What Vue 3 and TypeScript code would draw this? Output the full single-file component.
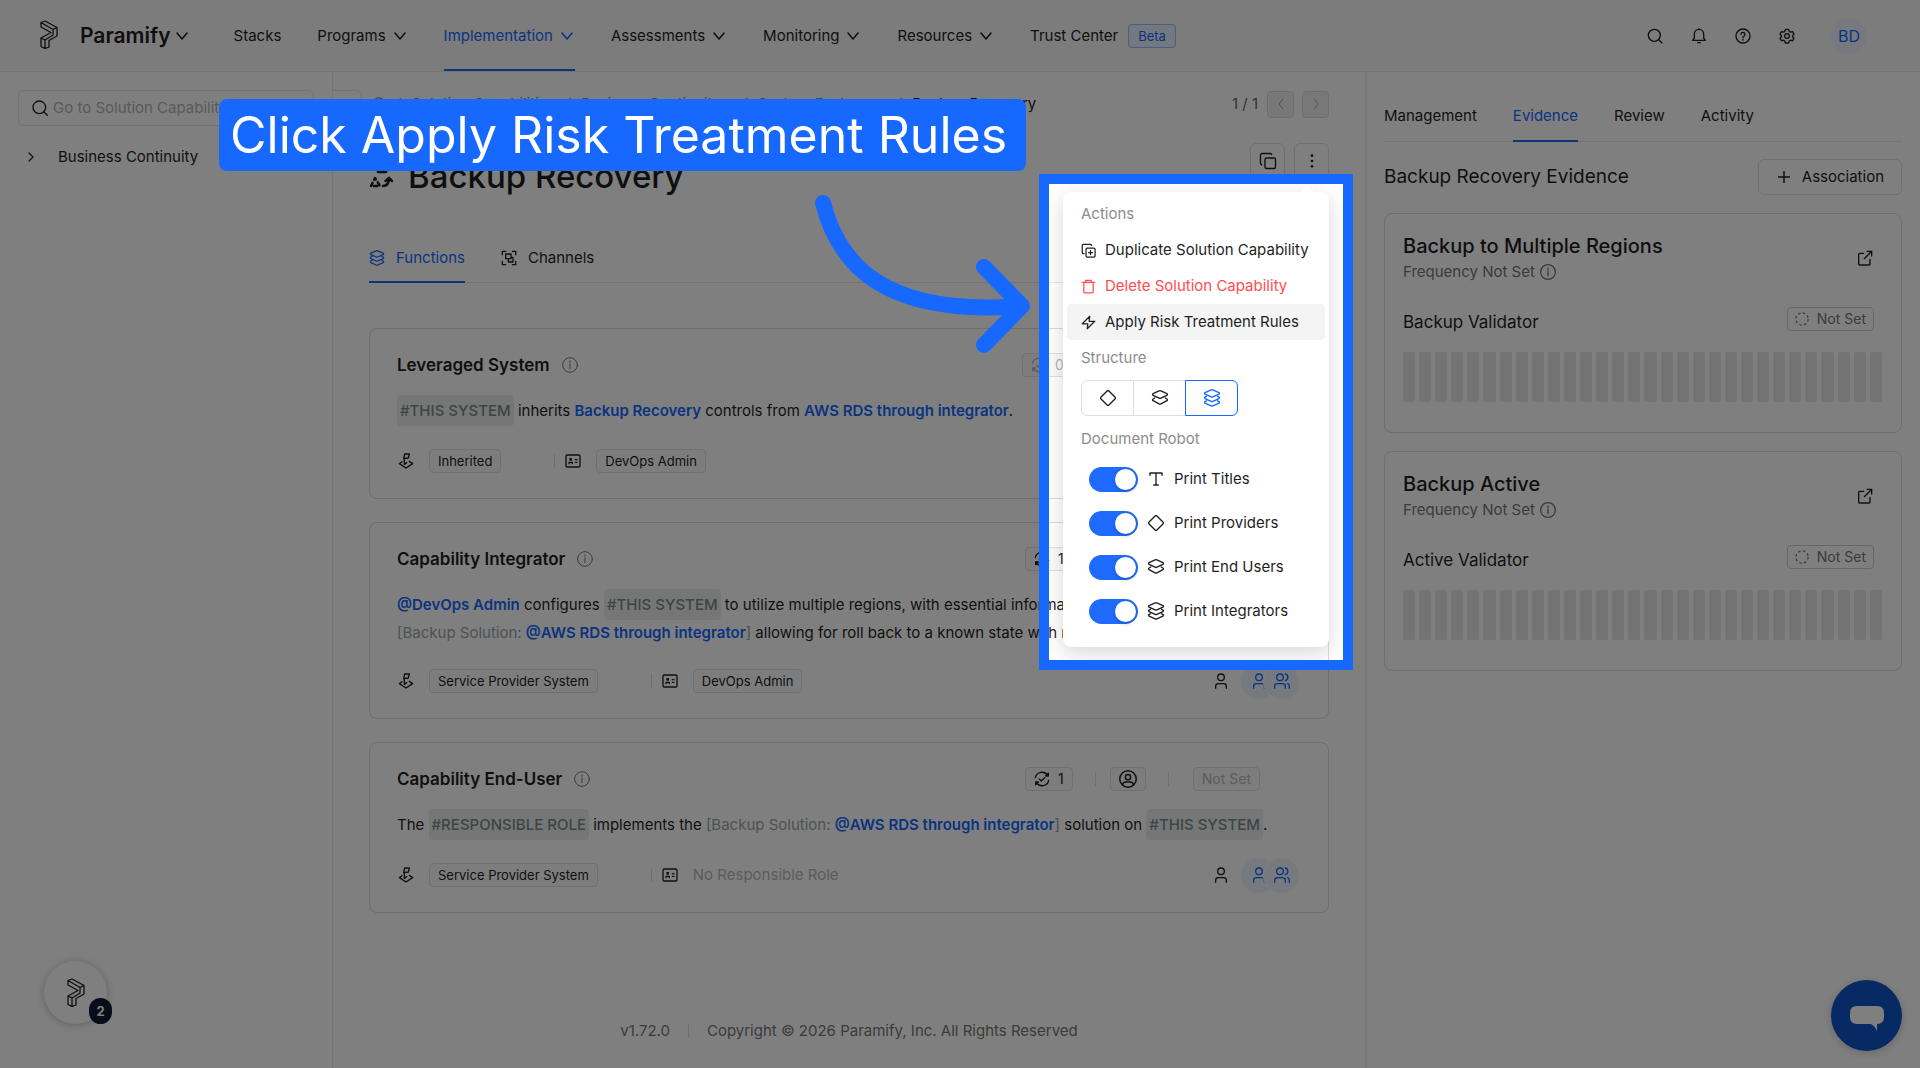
<script setup lang="ts">
import { ref } from 'vue'

interface NavItem { label: string; menu: boolean; active?: boolean }
const nav: NavItem[] = [
  { label: 'Stacks', menu: false },
  { label: 'Programs', menu: true },
  { label: 'Implementation', menu: true, active: true },
  { label: 'Assessments', menu: true },
  { label: 'Monitoring', menu: true },
  { label: 'Resources', menu: true },
  { label: 'Trust Center', menu: false },
]

const crumbs = [
  { label: 'Solution Capabilities', menu: false },
  { label: 'Business Continuity', menu: true },
  { label: 'System Features', menu: true },
]
const sideTabs: string[] = ['Management', 'Evidence', 'Review', 'Activity']
const evidence = [
  { title: 'Backup to Multiple Regions', validator: 'Backup Validator' },
  { title: 'Backup Active', validator: 'Active Validator' },
]

type Kind = 'text' | 'tag' | 'link' | 'soft'
interface Part { kind: Kind; text: string }
interface CapCard { title: string; count: number; muted: boolean; parts: Part[]; system: string; role: string | null; people: boolean }
const t = (text: string): Part => ({ kind: 'text', text })
const tag = (text: string): Part => ({ kind: 'tag', text })
const link = (text: string): Part => ({ kind: 'link', text })
const soft = (text: string): Part => ({ kind: 'soft', text })
const cards: CapCard[] = [
  {
    title: 'Leveraged System', count: 0, muted: true, system: 'Inherited', role: 'DevOps Admin', people: false,
    parts: [tag('#THIS SYSTEM'), t(' inherits '), link('Backup Recovery'), t(' controls from '), link('AWS RDS through integrator'), t('.')],
  },
  {
    title: 'Capability Integrator', count: 1, muted: false, system: 'Service Provider System', role: 'DevOps Admin', people: true,
    parts: [link('@DevOps Admin'), t(' configures '), tag('#THIS SYSTEM'), t(' to utilize multiple regions, with essential information backed up daily with '), soft('[Backup Solution: '), link('@AWS RDS through integrator'), soft(']'), t(' allowing for roll back to a known state with minimal loss.')],
  },
  {
    title: 'Capability End-User', count: 1, muted: false, system: 'Service Provider System', role: null, people: true,
    parts: [t('The '), tag('#RESPONSIBLE ROLE'), t(' implements the '), soft('[Backup Solution: '), link('@AWS RDS through integrator'), soft(']'), t(' solution on '), tag('#THIS SYSTEM'), t('.')],
  },
]

const structure = ref('three')
const shapes: Record<string, string> = {
  title: 'M4 7V4h16v3M12 4v16M9 20h6',
  one: 'M10.8 2.7a1.7 1.7 0 0 1 2.4 0l8.1 8.1a1.7 1.7 0 0 1 0 2.4l-8.1 8.1a1.7 1.7 0 0 1-2.4 0l-8.1-8.1a1.7 1.7 0 0 1 0-2.4z',
  two: 'M10.800 2.400q1.200-.6 2.400 0l8 3.800q1.500 1 0 2.200l-8 3.900q-1.200.6-2.400 0l-8-3.900q-1.500-1.200 0-2.200zM5 12l-2.200 1.400q-1.500 1.200 0 2.200l8 4.200q1.200.6 2.400 0l8-4.200q1.500-1 0-2.200L19 12',
  three: 'M10.900 1.300q1.100-.6 2.200 0l8.200 3.500q1.300 1 0 2l-8.200 3.700q-1.100.6-2.200 0L2.700 6.800q-1.300-1 0-2zM4.500 9.800l-1.800 1q-1.300 1 0 2l8.200 3.700q1.100.6 2.200 0l8.200-3.700q1.300-1 0-2l-1.800-1M4.500 15.800l-1.800 1q-1.300 1 0 2l8.200 3.700q1.100.6 2.200 0l8.200-3.700q1.300-1 0-2l-1.800-1',
}
const structures = [
  { id: 'one', label: 'Provider' },
  { id: 'two', label: 'End user' },
  { id: 'three', label: 'Integrator' },
]
const prints = ref([
  { id: 'title', label: 'Print Titles', on: true },
  { id: 'one', label: 'Print Providers', on: true },
  { id: 'two', label: 'Print End Users', on: true },
  { id: 'three', label: 'Print Integrators', on: true },
])
const logo = 'M1 2.500 5 1l12 6.500V16l-8 4.500V27l-4 1.500-4-2V18l10-5.500L1 7zM1 2.500l12 7 4-2M13 9.500V15l-8 5-4-2M5 20v8.500'
</script>

<template>
  <div class="page">
    <header class="top">
      <svg class="logo" viewBox="0 0 18 29"><path :d="logo" /></svg>
      <button class="brand">Paramify <svg class="i12" viewBox="0 0 12 12"><path d="m1 3 5 6 5-6" /></svg></button>
      <nav class="nav">
        <a v-for="n in nav" :key="n.label" href="#" :class="{ on: n.active, drop: n.menu }">{{ n.label }}<svg v-if="n.menu" class="i12" viewBox="0 0 12 12"><path d="m1 3 5 6 5-6" /></svg></a>
        <span class="beta">Beta</span>
      </nav>
      <div class="tools">
        <button aria-label="Search"><svg viewBox="0 0 24 24"><circle cx="11" cy="11" r="9" /><path d="m17.500 17.500 5 5" /></svg></button>
        <button aria-label="Notifications"><svg viewBox="0 0 24 24"><path d="M2.500 18.500h19L19 15V9a7 7 0 0 0-14 0v6zM12 1v1M10 22h4" /></svg></button>
        <button aria-label="Help"><svg viewBox="0 0 24 24"><circle cx="12" cy="12" r="10.500" /><path d="M9 9.500a3 3 0 1 1 4.500 2.600Q12 13 12 14.500M12 17.200v1" /></svg></button>
        <button aria-label="Settings"><svg viewBox="0 0 24 24"><circle cx="12" cy="12" r="3.500" /><path d="m9.500 2-.8 3-2 1.200-3-.8-2.200 3.800 2.200 2.300v1.500l-2.200 2.300 2.200 3.800 3-.8 2 1.200.8 3h5l.8-3 2-1.200 3 .8 2.200-3.800-2.200-2.300v-1.500l2.200-2.300-2.200-3.800-3 .8-2-1.200-.8-3z" /></svg></button>
        <span class="me">BD</span>
      </div>
    </header>

    <div class="cols">
      <aside class="left">
        <label class="search">
          <svg class="i16" viewBox="0 0 24 24"><circle cx="11" cy="11" r="9.500" /><path d="m18 18 5 5" /></svg>
          <input type="text" placeholder="Go to Solution Capability" aria-label="Go to Solution Capability">
        </label>
        <button class="tree"><svg viewBox="0 0 6 10"><path d="m1 1 4 4-4 4" /></svg>Business Continuity</button>
      </aside>

      <main class="main">
        <div class="crumbrow">
          <button class="fold" aria-label="Collapse"></button>
          <ol class="crumbs">
            <li><svg class="i14" viewBox="0 0 24 24"><circle cx="12" cy="12" r="10.500" /></svg></li>
            <li v-for="c in crumbs" :key="c.label"><a href="#">{{ c.label }}</a><svg v-if="c.menu" class="down" viewBox="0 0 12 12"><path d="m2 4 4 4 4-4" /></svg></li>
            <li class="here">Backup Recovery</li>
          </ol>
          <span class="count">1 / 1</span>
          <button class="pg" aria-label="Previous" disabled><svg viewBox="0 0 8 12"><path d="M6 1 2 6l4 5" /></svg></button>
          <button class="pg" aria-label="Next" disabled><svg viewBox="0 0 8 12"><path d="m2 1 4 5-4 5" /></svg></button>
        </div>

        <div class="titlerow">
          <svg class="shapeicon" viewBox="0 0 24 24"><path d="M9 1h8v6H9z" /><path stroke-dasharray="3.500 3.500" d="M2 21l4-8 5 8z" /><path d="M14 21c4 0 6-2 6-8M16.500 16l3.500-3 3 3" /></svg>
          <h1>Backup Recovery</h1>
          <button class="sq" aria-label="Copy"><svg viewBox="0 0 24 24"><rect x="8" y="8" width="14" height="14" rx="2" /><path d="M3.500 17A2 2 0 0 1 2 15V4a2 2 0 0 1 2-2h11a2 2 0 0 1 2 1.500" /></svg></button>
          <div class="morewrap">
            <button class="sq" aria-label="More"><svg class="dots" viewBox="0 0 24 24"><circle cx="12" cy="4" r="2" /><circle cx="12" cy="12" r="2" /><circle cx="12" cy="20" r="2" /></svg></button>
            <div class="menu">
              <span class="tip"></span>
              <p class="cap">Actions</p>
              <button class="item"><svg viewBox="0 0 24 24"><rect x="8" y="8" width="14.500" height="14.500" rx="2" /><path d="M5 17H4a2 2 0 0 1-2-2V4a2 2 0 0 1 2-2h11a2 2 0 0 1 2 2M15.200 12v6.500M12 15.200h6.500" /></svg>Duplicate Solution Capability</button>
              <button class="item danger"><svg viewBox="0 0 24 24"><path d="M2 5.500h20M7.500 5V2h9v3M4.500 6v14.500a1.500 1.500 0 0 0 1.500 1.500h12a1.500 1.500 0 0 0 1.500-1.500V6" /></svg>Delete Solution Capability</button>
              <button class="item hot"><svg viewBox="0 0 24 24"><path d="M14 2 2 14h9l-1 8 12-12h-9z" /></svg>Apply Risk Treatment Rules</button>
              <p class="cap">Structure</p>
              <div class="seg">
                <label v-for="s in structures" :key="s.id" :class="{ on: structure === s.id }">
                  <input v-model="structure" type="radio" name="structure" :value="s.id" :aria-label="s.label">
                  <svg viewBox="0 0 24 24"><path :d="shapes[s.id]" /></svg>
                </label>
              </div>
              <p class="cap">Document Robot</p>
              <label v-for="p in prints" :key="p.id" class="print">
                <input v-model="p.on" type="checkbox">
                <svg viewBox="0 0 24 24"><path :d="shapes[p.id]" /></svg>{{ p.label }}
              </label>
            </div>
            <div class="spot"></div>
          </div>
        </div>

        <div class="tabs">
          <a href="#" class="on"><svg class="i16" viewBox="0 0 24 24"><path :d="shapes.three" /></svg>Functions</a>
          <a href="#"><svg class="i16" viewBox="0 0 24 24"><path d="M2 7V2h5M17 2h5v5M22 17v5h-5M7 22H2v-5M7 6h8v7H7zM11 13v5h7v-7h-3" /></svg>Channels</a>
        </div>

        <section v-for="c in cards" :key="c.title" class="card">
          <div class="cardhead">
            <h2>{{ c.title }}</h2>
            <svg class="info" viewBox="0 0 24 24"><circle cx="12" cy="12" r="11" /><path d="M12 10.500v7M12 6v2" /></svg>
            <div class="stats">
              <span class="chip" :class="{ muted: c.muted }"><svg class="i16" viewBox="0 0 24 24"><path d="M2 10A10.200 10.200 0 0 1 20.500 6.500M22 14A10.200 10.200 0 0 1 3.500 17.500M8 12l3 3 5-5" /><path d="M21.500 3.500v4h-4zM2.500 20.500v-4h4z" fill="currentColor" /></svg>{{ c.count }}</span>
              <i></i>
              <span class="chip"><svg class="i18" viewBox="0 0 24 24"><circle cx="12" cy="12" r="11" /><circle cx="12" cy="9.500" r="3.500" /><path d="M5 20q0-4 4-4h6q4 0 4 4" /></svg></span>
              <i></i>
              <span class="chip unset">Not Set</span>
            </div>
          </div>
          <p class="body"><template v-for="(p, k) in c.parts" :key="k"><span v-if="p.kind !== 'link'" :class="p.kind">{{ p.text }}</span><a v-else href="#">{{ p.text }}</a></template></p>
          <div class="cardfoot">
            <svg class="i16" viewBox="0 0 24 24"><path d="M8.500 8.500 10 1.500h7l-1.500 6zM9.500 8.500V17l3.500-2.500M6 13l-4 3 10 6.500L22 16l-5-3.500" /></svg>
            <span class="chip sys">{{ c.system }}</span>
            <i></i>
            <svg class="i16 id" viewBox="0 0 24 24"><rect x="1.500" y="3" width="21" height="18" rx="2" /><path d="M6 16v-2h5v2M7.500 8.500h2v2h-2zM15.500 10h2.500M15.500 14h2.500" /></svg>
            <span v-if="c.role" class="chip">{{ c.role }}</span>
            <span v-else class="none">No Responsible Role</span>
            <div v-if="c.people" class="people">
              <svg class="i16" viewBox="0 0 24 24"><circle cx="12" cy="6.500" r="5" /><path d="M4 23v-3q0-4 4-4h8q4 0 4 4v3" /></svg>
              <span class="av"><svg class="i16" viewBox="0 0 24 24"><circle cx="12" cy="6.500" r="5" /><path d="M4 23v-3q0-4 4-4h8q4 0 4 4v3" /></svg></span>
              <span class="av"><svg class="i16" viewBox="0 0 24 24"><circle cx="9" cy="6.500" r="5" /><path d="M1 23v-3q0-4 4-4h8q4 0 4 4v3M17 1.500a5.200 5.200 0 0 1 0 10M20.500 16q2.500 1 2.500 4v3" /></svg></span>
            </div>
          </div>
        </section>

        <footer class="foot"><span>v1.72.0</span><i></i><span>Copyright © 2026 Paramify, Inc. All Rights Reserved</span></footer>
      </main>

      <aside class="right">
        <div class="rtabs"><a v-for="s in sideTabs" :key="s" href="#" :class="{ on: s === 'Evidence' }">{{ s }}</a></div>
        <div class="rhead">
          <h3>Backup Recovery Evidence</h3>
          <button class="assoc"><svg viewBox="0 0 12 12"><path d="M6 0v12M0 6h12" /></svg>Association</button>
        </div>
        <section v-for="e in evidence" :key="e.title" class="ev">
          <div class="evtop">
            <div>
              <h4>{{ e.title }}</h4>
              <p class="freq">Frequency Not Set <svg class="i16" viewBox="0 0 24 24"><circle cx="12" cy="12" r="11" /><path d="M12 10.500v7M12 6v2" /></svg></p>
            </div>
            <a href="#" aria-label="Open"><svg class="i16" viewBox="0 0 24 24"><path d="M15 2h7v7M22 2 11 13M10 5H4a1.500 1.500 0 0 0-1.500 1.500V21A1.500 1.500 0 0 0 4 22.500h14a1.500 1.500 0 0 0 1.500-1.500v-7" /></svg></a>
          </div>
          <div class="evmid">
            <span>{{ e.validator }}</span>
            <span class="ns"><svg viewBox="0 0 16 16"><circle cx="8" cy="8" r="7" stroke-dasharray="3 2.500" /></svg>Not Set</span>
          </div>
          <div class="bars"><b v-for="n in 30" :key="n"></b></div>
        </section>
      </aside>
    </div>

    <button class="helper" aria-label="Checklist"><svg viewBox="0 0 18 29"><path :d="logo" /></svg><span>2</span></button>
    <button class="chat" aria-label="Chat"><svg viewBox="0 0 34 26"><path d="M7 0h20q7 0 7 7v4q0 7-7 7v7q-2-5-6-7H7q-7 0-7-7V7q0-7 7-7z" /></svg></button>

    <div class="callout">Click Apply Risk Treatment Rules</div>
    <svg class="arrow" viewBox="0 0 216 158"><path d="M9 9C24 67 66 123 207 112M170 73l38 39-38 39" /></svg>
  </div>
</template>

<style>
body { margin: 0; background: #fff; }
</style>
<style scoped>
* { box-sizing: border-box; }
.page { position: relative; min-height: 100vh; display: flex; flex-direction: column; overflow: hidden; font: 15px/22px Inter, sans-serif; color: #1f1f1f; }
button { font: inherit; color: inherit; background: none; border: 0; padding: 0; cursor: pointer; }
a { color: inherit; text-decoration: none; }
h1, h2, h3, h4, p, ol { margin: 0; padding: 0; font-weight: 400; }
svg { fill: none; stroke: currentColor; stroke-width: 2; stroke-linecap: round; stroke-linejoin: round; flex: none; display: block; }
.i12 { width: 12px; height: 12px; stroke-width: 1.500; }
.i14 { width: 14px; height: 14px; }
.i16 { width: 16px; height: 16px; }
.i18 { width: 18px; height: 18px; }

.top { height: 72px; display: flex; align-items: center; padding: 0 53px 0 40px; background: #f8f8f8; border-bottom: 1px solid #e8e8e8; }
.logo { width: 18px; height: 29px; margin-bottom: 2px; stroke-width: 1.300; }
.brand { display: flex; align-items: center; gap: 5px; margin-left: 22px; font-size: 21px; font-weight: 600; }
.nav { display: flex; align-items: stretch; height: 71px; margin-left: 46px; gap: 36px; }
.nav a { display: flex; align-items: center; gap: 8px; border-bottom: 2px solid transparent; border-top: 2px solid transparent; }
.nav .drop { padding-right: 2px; }
.nav a.on { color: #1668ff; border-bottom-color: #1668ff; }
.beta { align-self: center; margin-left: -26px; padding: 0 9px; border: 1px solid #91c0ff; background: #e9f2ff; color: #1668ff; border-radius: 4px; font-size: 13px; }
.tools { margin-left: auto; display: flex; align-items: center; gap: 28px; }
.tools svg { width: 16px; height: 16px; }
.me { width: 36px; height: 36px; border-radius: 50%; background: #edf3fd; color: #1668ff; display: grid; place-items: center; font-size: 16px; margin-left: 8px; }

.cols { flex: 1; display: grid; grid-template-columns: 333px minmax(0, 1fr) 555px; }
.left { border-right: 1px solid #e8e8e8; padding: 18px; }
.search { display: flex; align-items: center; gap: 5px; height: 36px; padding: 0 13px; border: 1px solid #e5e5e5; border-radius: 6px; }
.search input { flex: 1; min-width: 0; border: 0; outline: 0; padding: 0; background: none; font: inherit; }
.search input::placeholder { color: #b4b4b4; opacity: 1; }
.tree { display: flex; align-items: center; gap: 24px; margin: 20px 0 0 10px; }
.tree svg { width: 6px; height: 10px; stroke-width: 1.200; }

.main { padding: 18px 36px 26px 0; display: flex; flex-direction: column; }
.crumbrow { display: flex; align-items: center; height: 28px; }
.fold { width: 29px; height: 28px; border: 1px solid #e0e0e0; border-left: 0; border-radius: 0 6px 6px 0; }
.crumbs { display: flex; list-style: none; margin-left: 10px; color: #8c8c8c; }
.crumbs li { display: flex; align-items: center; }
.crumbs li + li::before { content: "/"; margin: 0 10px; color: #8c8c8c; }
.crumbs .down { width: 10px; height: 10px; margin-left: 1px; }
.crumbs .here { color: #1f1f1f; }
.count { margin-left: auto; margin-right: 9px; color: #666; }
.pg { width: 27px; height: 27px; border: 1px solid #dcdcdc; background: #f0f0f0; border-radius: 4px; display: grid; place-items: center; color: #a0a0a0; }
.pg + .pg { margin-left: 8px; }
.pg svg { width: 8px; height: 12px; stroke-width: 1; }
.titlerow { display: flex; align-items: center; gap: 9px; margin: 25px 0 0 36px; height: 36px; }
.shapeicon { width: 24px; height: 24px; margin-top: 32px; stroke-width: 2.500; }
h1 { font-size: 33px; line-height: 40px; font-weight: 500; margin: 30px auto 0 6px; }
.sq { width: 35px; height: 36px; border: 1px solid #e0e0e0; border-radius: 6px; display: grid; place-items: center; }
.sq svg { width: 18px; height: 18px; stroke-width: 1.800; }
.sq .dots { fill: currentColor; stroke: none; width: 16px; height: 16px; }
.morewrap { position: relative; }

.tabs { display: flex; gap: 36px; margin: 60px 0 45px 36px; border-bottom: 1px solid #e8e8e8; }
.tabs a { display: flex; align-items: center; gap: 11px; padding: 8px 0 12px; margin-bottom: -1px; border-bottom: 2px solid transparent; }
.tabs .on { color: #1668ff; border-color: #1668ff; }

.card { margin: 0 0 23px 36px; border: 1px solid #dcdcdc; border-radius: 8px; padding: 24px 27px 18px; }
.cardhead { display: flex; align-items: center; height: 24px; }
h2 { font-size: 17px; line-height: 24px; font-weight: 600; }
.info { width: 16px; height: 16px; margin-left: 12px; color: #777; stroke-width: 1.500; }
.stats { margin-left: auto; margin-right: 41px; display: flex; align-items: center; }
.stats i, .cardfoot > i { width: 1px; height: 14px; background: #e0e0e0; }
.chip { display: flex; align-items: center; gap: 8px; height: 24px; padding: 0 8px; border: 1px solid #e0e0e0; border-radius: 4px; background: #fafafa; font-size: 13px; white-space: nowrap; }
.stats .chip { font-size: 14px; }
.stats i { margin: 0 14px 0 22px; }
.stats i + .unset { margin-left: 10px; }
.muted, .unset { color: #b8b8b8; }
.body { margin-top: 18px; line-height: 26px; }
.body a { color: #1668ff; font-weight: 600; }
.body .tag { display: inline-block; line-height: 31px; background: #ebefee; color: #7d8988; border-radius: 4px; padding: 0 3px; font-weight: 500; }
.body .soft { color: #9aa5a5; }
.cardfoot { display: flex; align-items: center; height: 38px; margin-top: 16px; padding-left: 1px; }
.cardfoot .sys { margin-left: 15px; }
.cardfoot > i { margin: 0 10px 0 53px; }
.cardfoot .id { margin-right: 15px; }
.none { color: #b8b8b8; }
.people { display: flex; align-items: center; margin-left: auto; margin-right: 1px; }
.av { width: 37px; height: 37px; border: 1px solid #fff; border-radius: 50%; background: #edf3fd; color: #1668ff; display: grid; place-items: center; }
.av + .av { margin-left: -14px; }
.people .i16 + .av { margin-left: 11px; }
.foot { margin-top: auto; display: flex; justify-content: center; align-items: center; color: #777; padding-left: 36px; }
.foot i { width: 1px; height: 14px; background: #dcdcdc; margin: 0 18px; }

.right { border-left: 2px solid #eee; padding: 32px 18px 0 17px; }
.rtabs { display: flex; gap: 36px; border-bottom: 1px solid #e8e8e8; }
.rtabs a { padding: 1px 0 13px; margin-bottom: -1px; border-bottom: 2px solid transparent; }
.rtabs .on { color: #1668ff; border-color: #1668ff; }
.rhead { display: flex; justify-content: space-between; align-items: center; margin: 17px 0 18px; }
h3 { font-size: 19px; }
.assoc { display: flex; align-items: center; gap: 12px; height: 36px; padding: 0 17px 0 19px; border: 1px solid #e0e0e0; border-radius: 6px; }
.assoc svg { width: 12px; height: 12px; stroke-width: 1.500; stroke-linecap: butt; }
.ev { border: 1px solid #dcdcdc; border-radius: 8px; padding: 18px 19px 30px 18px; margin-bottom: 18px; }
.evtop { display: flex; justify-content: space-between; align-items: center; padding-right: 9px; }
h4 { font-size: 20px; line-height: 28px; font-weight: 500; }
.freq { display: flex; align-items: center; gap: 5px; color: #777; line-height: 24px; }
.evmid { display: flex; justify-content: space-between; margin-top: 23px; padding-right: 8px; font-size: 17px; line-height: 30px; height: 45px; }
.ns { display: flex; align-items: center; gap: 8px; height: 24px; padding: 0 7px; border: 1px solid #d0d0d0; border-radius: 4px; font-size: 14px; color: #777; }
.ns svg { width: 14px; height: 14px; stroke-width: 1.500; stroke-linecap: butt; }
.bars { display: flex; gap: 4px; height: 50px; }
.bars b { flex: 1; background: #e8e8e8; border-radius: 2px; }

.menu { position: absolute; z-index: 3; top: 49px; right: 0; width: 266px; padding: 4px 4px 14px; background: #fff; border-radius: 8px; box-shadow: 0 6px 20px rgba(0, 0, 0, .16); }
.tip { position: absolute; top: -6px; right: 14px; border: 8px solid transparent; border-bottom-color: #fff; border-top: 0; border-bottom-width: 7px; }
.cap { color: #8c8c8c; padding: 7px 14px; line-height: 22px; }
.item { display: flex; align-items: center; gap: 9px; width: 100%; height: 36px; padding: 0 14px; border-radius: 4px; white-space: nowrap; text-align: left; }
.item svg { width: 15px; height: 15px; }
.danger { color: #ff4d4f; }
.hot { background: #f4f4f4; }
.seg { display: flex; margin: 4px 14px 5px; width: 157px; height: 36px; }
.seg label { flex: 1; display: grid; place-items: center; border: 1px solid #dedede; margin-right: -1px; }
.seg label:first-child { border-radius: 6px 0 0 6px; }
.seg label:last-child { border-radius: 0 6px 6px 0; margin-right: 0; }
.seg .on { border-color: #1668ff; color: #1668ff; z-index: 1; }
.seg input { position: absolute; opacity: 0; width: 0; height: 0; margin: 0; }
.seg svg { width: 18px; height: 18px; stroke-width: 1.800; }
.print { display: flex; align-items: center; height: 44px; padding-left: 22px; }
.print svg { width: 18px; height: 18px; margin: 0 9px; stroke-width: 1.800; }
.print input { appearance: none; width: 49px; height: 25px; margin: 0; border-radius: 13px; background: #bfbfbf; display: flex; align-items: center; padding: 0 2px; }
.print input::after { content: ""; width: 21px; height: 21px; border-radius: 50%; background: #fff; box-shadow: 0 2px 4px rgba(0, 35, 11, .2); }
.print input:checked { background: #1f6bff; justify-content: flex-end; }
.spot { position: absolute; z-index: 4; top: 41px; right: -14px; width: 294px; height: 476px; box-shadow: 0 0 0 10px #1668ff, 0 0 0 4000px rgba(0, 0, 0, .5); pointer-events: none; }

.helper { position: absolute; left: 44px; bottom: 44px; width: 63px; height: 63px; border-radius: 50%; background: #fff; box-shadow: 0 1px 8px rgba(0, 0, 0, .25); display: grid; place-items: center; }
.helper svg { width: 18px; height: 29px; stroke-width: 1.300; }
.helper span { position: absolute; right: -5px; bottom: 0; width: 23px; height: 26px; border-radius: 13px; background: #0f1b33; color: #fff; font-size: 13px; line-height: 26px; font-weight: 700; }
.chat { position: absolute; right: 18px; bottom: 17px; width: 71px; height: 71px; border-radius: 50%; background: #0f52c8; display: grid; place-items: center; color: #fff; box-shadow: 0 2px 10px rgba(0, 0, 0, .2); }
.chat svg { width: 34px; height: 26px; margin-top: 6px; fill: currentColor; stroke: none; }

.callout { position: absolute; z-index: 5; left: 219px; top: 99px; padding: 0 19px 0 11px; border-radius: 8px; background: #1668ff; color: #fff; font-size: 50px; line-height: 72px; white-space: nowrap; }
.arrow { position: absolute; z-index: 5; left: 814px; top: 194px; width: 216px; height: 158px; color: #1668ff; stroke-width: 16; overflow: visible; }
</style>
